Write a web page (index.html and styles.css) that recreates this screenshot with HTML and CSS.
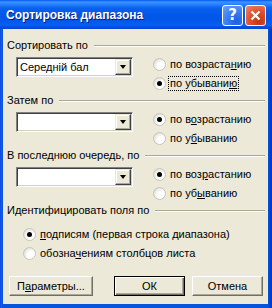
FILE: index.html
```html
<!DOCTYPE html>
<html lang="ru">
<head>
<meta charset="utf-8">
<title>Сортировка диапазона</title>
<link rel="stylesheet" href="styles.css">
</head>
<body>
<div class="window">
  <div class="titlebar">
    <span class="title">Сортировка диапазона</span>
    <div class="tbtns">
      <span class="tb help">?</span>
      <span class="tb close"><svg width="13" height="13" viewBox="0 0 13 13"><path d="M2.5 2.5 L10.5 10.5 M10.5 2.5 L2.5 10.5" stroke="#fff" stroke-width="2.2" fill="none"/></svg></span>
    </div>
  </div>
  <div class="client">
    <section class="group">
      <div class="ghead"><span>Сортировать по</span></div>
      <div class="grow">
        <div class="combo"><span class="cval">Середній бал</span><span class="cbtn"><i class="tri"></i></span></div>
        <div class="radios">
          <div class="radio"><span class="rb"></span><span class="rl">по возраста<u>н</u>ию</span></div>
          <div class="radio"><span class="rb on"></span><span class="rl focus">по убывани<u>ю</u></span></div>
        </div>
      </div>
    </section>
    <section class="group">
      <div class="ghead"><span>Затем по</span></div>
      <div class="grow">
        <div class="combo"><span class="cval"></span><span class="cbtn"><i class="tri"></i></span></div>
        <div class="radios">
          <div class="radio"><span class="rb on"></span><span class="rl">по в<u>о</u>зрастанию</span></div>
          <div class="radio"><span class="rb"></span><span class="rl">по у<u>б</u>ыванию</span></div>
        </div>
      </div>
    </section>
    <section class="group">
      <div class="ghead"><span>В последнюю очередь, по</span></div>
      <div class="grow">
        <div class="combo"><span class="cval"></span><span class="cbtn"><i class="tri"></i></span></div>
        <div class="radios">
          <div class="radio"><span class="rb on"></span><span class="rl">по воз<u>р</u>астанию</span></div>
          <div class="radio"><span class="rb"></span><span class="rl">по уб<u>ы</u>ванию</span></div>
        </div>
      </div>
    </section>
    <section class="group last">
      <div class="ghead"><span>Идентифицировать поля по</span></div>
      <div class="radios wide">
        <div class="radio"><span class="rb on"></span><span class="rl"><u>п</u>одписям (первая строка диапазона)</span></div>
        <div class="radio"><span class="rb"></span><span class="rl">обозна<u>ч</u>ениям столбцов листа</span></div>
      </div>
    </section>
    <div class="buttons">
      <span class="btn params">П<u>а</u>раметры...</span>
      <span class="btn ok">ОК</span>
      <span class="btn cancel">Отмена</span>
    </div>
  </div>
</div>
</body>
</html>
```
FILE: styles.css
```css
html, body {
  margin: 0;
  padding: 0;
}
body {
  width: 272px;
  height: 308px;
  overflow: hidden;
  font-family: "Liberation Sans", Arial, sans-serif;
  font-size: 11px;
  color: #000;
}
.window {
  width: 272px;
  height: 308px;
  display: flex;
  flex-direction: column;
  background: linear-gradient(to right, #0831D9 0, #166AEE 1px, #0855DD 2px, #0855DD 268px, #0040CF 270px, #0831D9 272px);
  box-sizing: border-box;
}
.titlebar {
  height: 29px;
  flex: none;
  display: flex;
  align-items: center;
  justify-content: space-between;
  padding: 1px 6px 0 6px;
  box-sizing: border-box;
  background: linear-gradient(to bottom, #0058EE 0, #3D93FF 2px, #2B84FF 4px, #0A61F0 8px, #0258EA 14px, #0256E8 20px, #0660F2 25px, #0648D8 28px, #0A45CD 29px);
}
.title {
  color: #fff;
  font-family: "Liberation Sans", Arial, sans-serif;
  font-weight: bold;
  font-size: 12px;
  text-shadow: 1px 1px 0 #0A1883;
}
.tbtns {
  display: flex;
  gap: 2px;
}
.tb {
  width: 21px;
  height: 21px;
  box-sizing: border-box;
  border: 1px solid #fff;
  border-radius: 3px;
  display: flex;
  align-items: center;
  justify-content: center;
}
.help {
  background: radial-gradient(circle at 70% 80%, #1A5FE8 0, #3C7FF3 50%, #6FA3FA 100%);
  color: #fff;
  font-family: "DejaVu Sans", sans-serif;
  font-weight: bold;
  font-size: 15px;
  line-height: 1;
}
.close {
  background: radial-gradient(circle at 70% 80%, #C23510 0, #DD5230 50%, #F08A6A 100%);
}
.client {
  flex: 1;
  margin: 0 4px 4px 3px;
  background: #ECE9D8;
  padding: 10px 3px 0 4px;
  display: flex;
  flex-direction: column;
}
.group {
  height: 55px;
  flex: none;
}
.group.last {
  height: 72px;
}
.ghead {
  height: 13px;
  display: flex;
  align-items: center;
  line-height: 13px;
}
.ghead::after {
  content: "";
  flex: 1;
  margin-left: 6px;
  height: 0;
  border-top: 1px solid #ACA899;
  border-bottom: 1px solid #fff;
  margin-top: 1px;
}
.grow {
  display: flex;
  margin-top: 5px;
}
.combo {
  margin-left: 9px;
  width: 117px;
  height: 20px;
  box-sizing: border-box;
  border: 1px solid;
  border-color: #808080 #fff #fff #808080;
  box-shadow: inset 1px 1px 0 #404040, inset -1px -1px 0 #D4D0C8;
  background: #fff;
  display: flex;
  align-items: center;
  justify-content: space-between;
  padding: 1px;
}
.cval {
  padding-left: 2px;
  white-space: nowrap;
}
.cbtn {
  width: 16px;
  height: 16px;
  box-sizing: border-box;
  background: #ECE9D8;
  border: 1px solid;
  border-color: #ECE9D8 #404040 #404040 #ECE9D8;
  box-shadow: inset -1px -1px 0 #ACA899, inset 1px 1px 0 #fff;
  display: flex;
  align-items: center;
  justify-content: center;
}
.tri {
  width: 0;
  height: 0;
  border-left: 3.5px solid transparent;
  border-right: 3.5px solid transparent;
  border-top: 4px solid #000;
}
.radios {
  margin-left: 20px;
  margin-top: -2px;
  display: flex;
  flex-direction: column;
}
.radios.wide {
  margin-left: 16px;
  margin-top: 8px;
}
.radio {
  height: 19px;
  display: flex;
  align-items: center;
}
.rb {
  width: 13px;
  height: 13px;
  box-sizing: border-box;
  border-radius: 50%;
  border: 1px solid #C8C6BC;
  background: radial-gradient(circle at 65% 65%, #fff 0, #fff 35%, #E4E2D8 75%, #C9C7BC 100%);
  margin-right: 2px;
  position: relative;
  flex: none;
}
.rb.on::after {
  content: "";
  position: absolute;
  left: 3px;
  top: 3px;
  width: 5px;
  height: 5px;
  border-radius: 50%;
  background: #000;
}
.rl {
  padding: 0 1px;
  line-height: 13px;
  border: 1px dotted transparent;
  white-space: nowrap;
}
.rl.focus {
  border-color: #000;
}
.buttons {
  display: flex;
  padding-left: 2px;
}
.btn {
  height: 20px;
  box-sizing: border-box;
  display: flex;
  align-items: center;
  justify-content: center;
  background: #ECE9D8;
  border: 1px solid;
  border-color: #fff #716F64 #716F64 #fff;
  box-shadow: inset -1px -1px 0 #ACA899;
}
.params {
  width: 84px;
}
.ok {
  width: 71px;
  margin-left: 21px;
  border-color: #000;
  box-shadow: inset 1px 1px 0 #fff, inset -1px -1px 0 #716F64, inset -2px -2px 0 #ACA899;
}
.cancel {
  width: 71px;
  margin-left: 7px;
}
```
